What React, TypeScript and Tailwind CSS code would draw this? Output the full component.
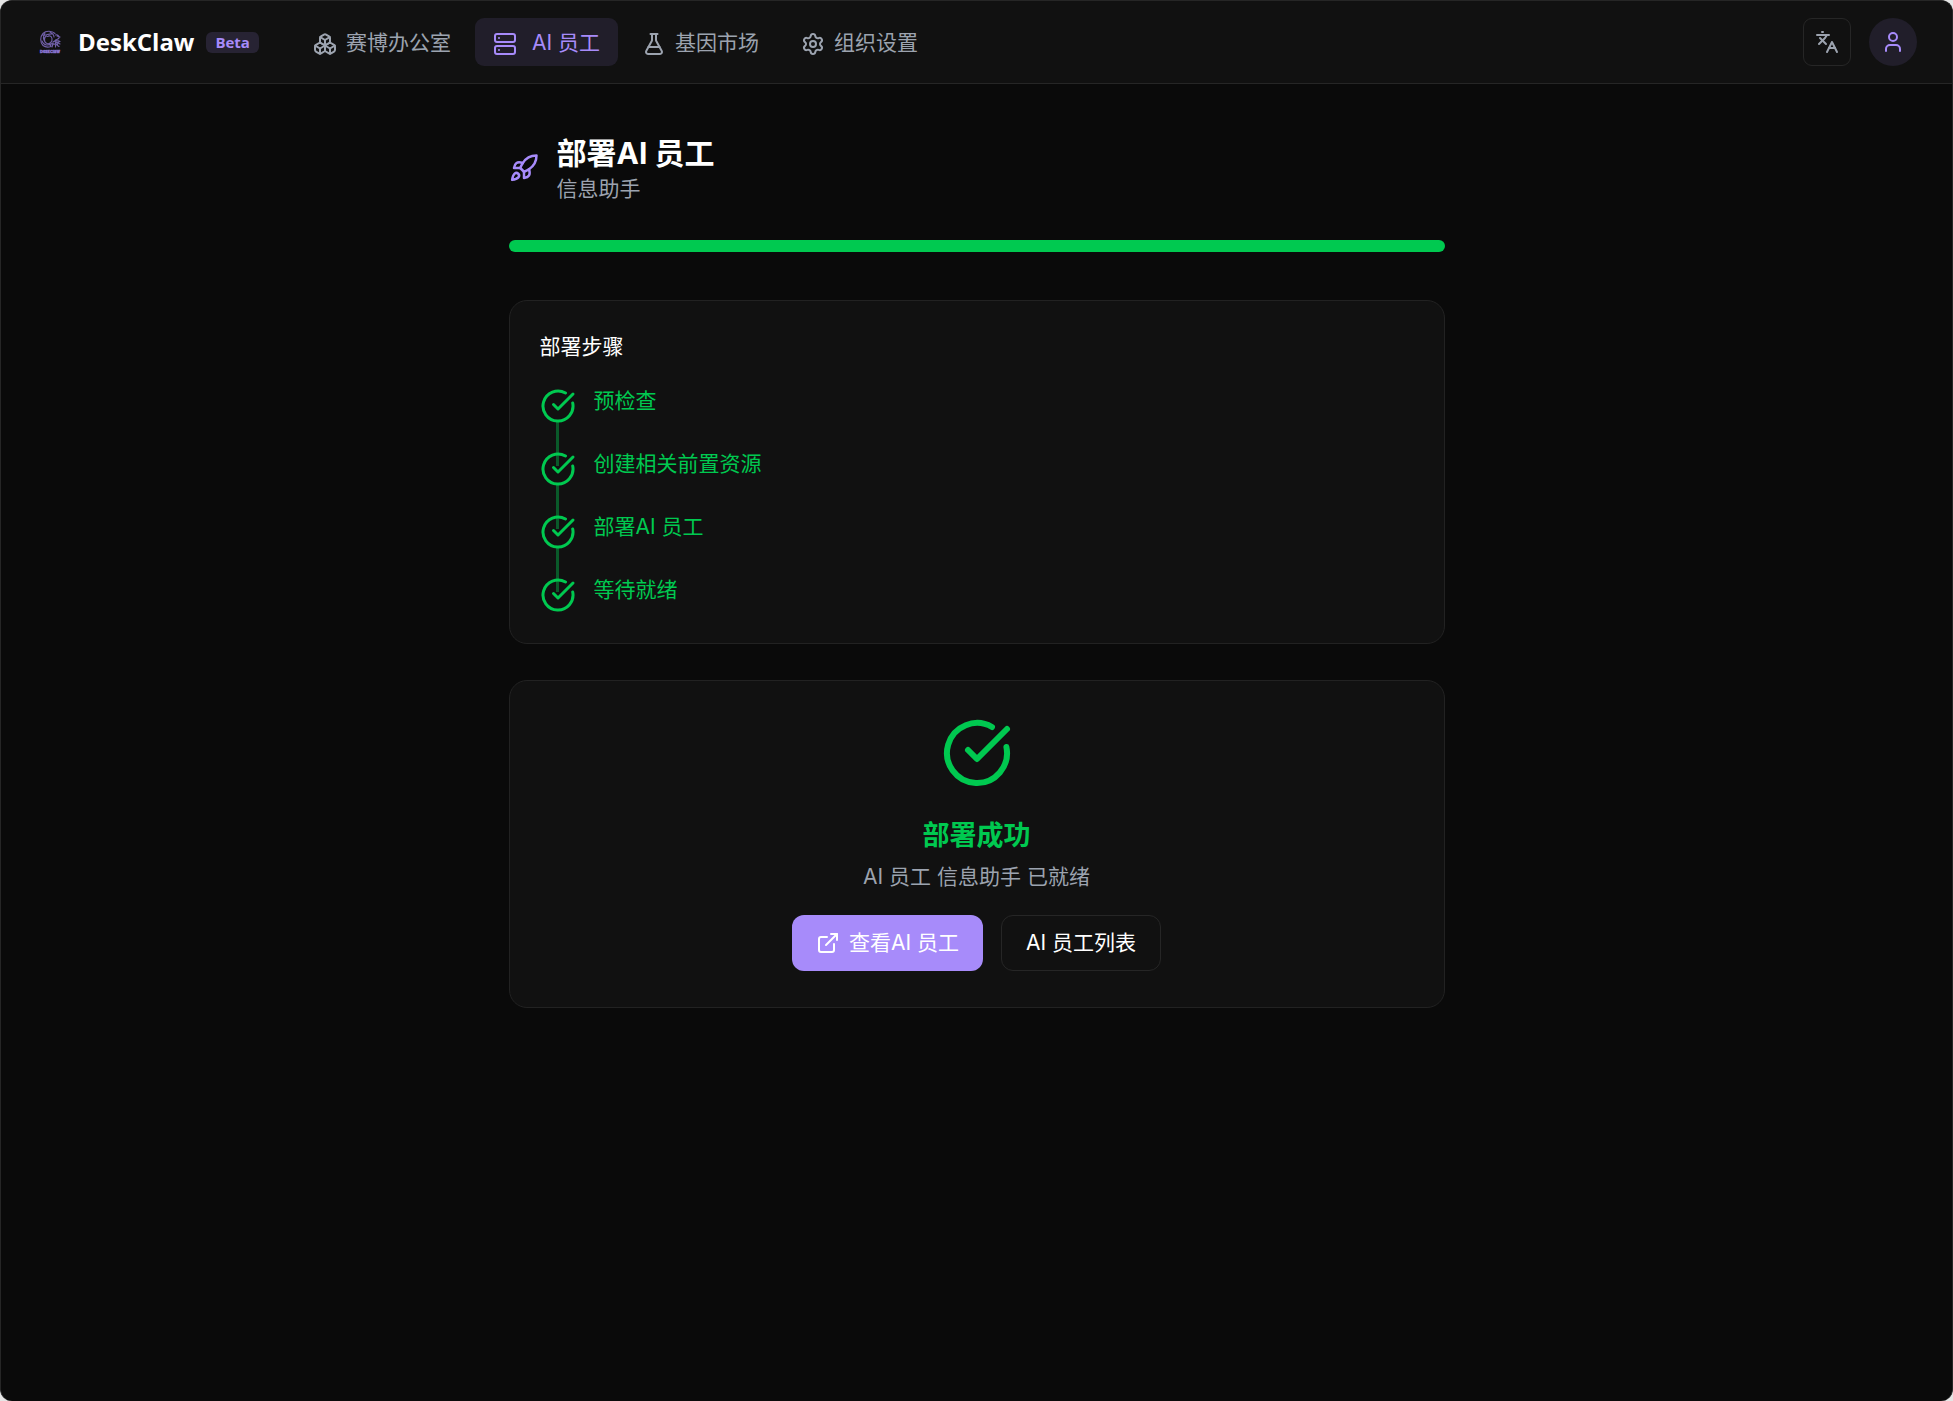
import {
  Boxes,
  CircleCheckBig,
  ExternalLink,
  FlaskConical,
  Languages,
  Rocket,
  Server,
  Settings,
  User,
  type LucideIcon,
} from "lucide-react";

type NavItem = { label: string; icon: LucideIcon; active?: boolean };

const navItems: NavItem[] = [
  { label: "赛博办公室", icon: Boxes },
  { label: "AI 员工", icon: Server, active: true },
  { label: "基因市场", icon: FlaskConical },
  { label: "组织设置", icon: Settings },
];

const steps = ["预检查", "创建相关前置资源", "部署AI 员工", "等待就绪"];

function Logo() {
  return (
    <svg viewBox="0 0 26 24" className="h-6 w-[26px]" fill="none" stroke="#8b75d2" aria-hidden="true">
      <g strokeWidth="1.1" opacity="0.8" strokeLinecap="round">
        <path d="M18 3.500C15 .8 9 .3 6 3.500s-3 9 0 12c2 1.600 5 2 8 1" />
        <path d="M6 5c3 1 6-2 10-1M9.500 6c-3 1.500-2.500 6.500.5 7.500s5.500-2 5-5-3-3-4.500-2M5 11c2 5 7 5 11 2M8 3c-2 3-2 6 0 9M12 14l2 2M13 2c2 1 4 2 4 5" />
        <path d="M18.500 5c2-1 4 1 3.500 3s-4 1-4 3 2.500 2 4.500.500M16 12c2-1.500 5-1.500 7-.500M15 14c3-.500 5 .500 7 2.500M18.500 10v7M20 6l3 1M19.500 12l1.500 4M16 14l-1 3M21 13l2 1" />
      </g>
      <text x="3" y="22.500" fontSize="4" fontWeight="800" fill="#8b75d2" stroke="#8b75d2" strokeWidth="0.4">
        DeskClaw
      </text>
    </svg>
  );
}

function Header() {
  return (
    <header className="flex h-[83px] items-center justify-between border-b border-[#262626] bg-[#111111] pl-9 pr-[35px]">
      <div className="flex items-center">
        <a href="#" className="flex items-center">
          <Logo />
          <span className="ml-[15px] font-['Open_Sans',sans-serif] text-[24px] font-bold leading-9 text-white">DeskClaw</span>
          <span className="ml-3 rounded-md bg-[#272333] px-[9px] font-['Open_Sans',sans-serif] text-[15px] font-bold leading-[21px] text-[#a78bfa]">
            Beta
          </span>
        </a>
        <nav className="ml-9 flex items-center gap-1.5">
          {navItems.map(({ label, icon: Icon, active }) => (
            <a
              key={label}
              href="#"
              className={
                active
                  ? "flex h-12 items-center gap-[15px] rounded-[9px] bg-[#211e2a] px-[18px] pt-0.5 text-[21px] text-[#a78bfa]"
                  : "flex h-12 items-center gap-[9px] rounded-[9px] px-[18px] pt-0.5 text-[21px] text-[#9ca3af]"
              }
            >
              <Icon className="mt-0.5 size-6" />
              {label}
            </a>
          ))}
        </nav>
      </div>
      <div className="flex items-center gap-[18px]">
        <button
          type="button"
          aria-label="切换语言"
          className="flex size-12 items-center justify-center rounded-[9px] border border-[#262626] text-[#9ca3af]"
        >
          <Languages className="size-6" />
        </button>
        <button
          type="button"
          aria-label="用户"
          className="flex size-12 items-center justify-center rounded-full bg-[#211e2a] text-[#a78bfa]"
        >
          <User className="size-6" />
        </button>
      </div>
    </header>
  );
}

export default function App() {
  return (
    <div className="flex min-h-screen bg-[#e5e5e5] font-['Inter','Noto_Sans_CJK_SC',sans-serif]">
      <div className="flex-1 overflow-hidden rounded-xl border border-b-0 border-[#262626] bg-[#0a0a0a]">
        <Header />
        <main className="mx-auto max-w-[1008px] px-9 py-12">
          <div className="flex items-center gap-[18px]">
            <Rocket className="size-[30px] text-[#a78bfa]" />
            <div>
              <h1 className="text-[30px] font-bold leading-[42px] text-white">部署AI 员工</h1>
              <p className="text-[21px] leading-[30px] text-[#9ca3af]">信息助手</p>
            </div>
          </div>

          <div
            role="progressbar"
            aria-label="部署进度"
            aria-valuenow={100}
            className="mt-9 h-3 rounded-full bg-[#00c950]"
          />

          <section className="mt-12 rounded-[18px] border border-[#222222] bg-[#111111] p-[30px]">
            <h2 className="text-[21px] leading-8 text-white">部署步骤</h2>
            <ol className="mt-[22px] flex flex-col gap-6">
              {steps.map((step, i) => (
                <li key={step} className="relative flex items-start gap-[18px] text-[#00c950]">
                  {i < steps.length - 1 && (
                    <span className="absolute left-4 top-[37px] h-11 w-[3px] bg-[#00c950]/40" />
                  )}
                  <CircleCheckBig className="mt-[3px] size-9" />
                  <span className="text-[21px] leading-8">{step}</span>
                </li>
              ))}
            </ol>
          </section>

          <section className="mt-9 flex flex-col items-center rounded-[18px] border border-[#222222] bg-[#111111] p-9">
            <CircleCheckBig className="size-[72px] text-[#00c950]" />
            <h2 className="mt-[26px] text-[27px] font-bold leading-[42px] text-[#00c950]">部署成功</h2>
            <p className="mt-1 text-[21px] leading-8 text-[#9ca3af]">AI 员工 信息助手 已就绪</p>
            <div className="mt-[22px] flex gap-[18px]">
              <button
                type="button"
                className="flex h-14 items-center gap-[9px] rounded-xl bg-[#a78bfa] px-6 text-[21px] text-white"
              >
                <ExternalLink className="size-6" />
                查看AI 员工
              </button>
              <button
                type="button"
                className="flex h-14 items-center rounded-xl border border-[#262626] px-6 text-[21px] text-white"
              >
                AI 员工列表
              </button>
            </div>
          </section>
        </main>
      </div>
    </div>
  );
}
